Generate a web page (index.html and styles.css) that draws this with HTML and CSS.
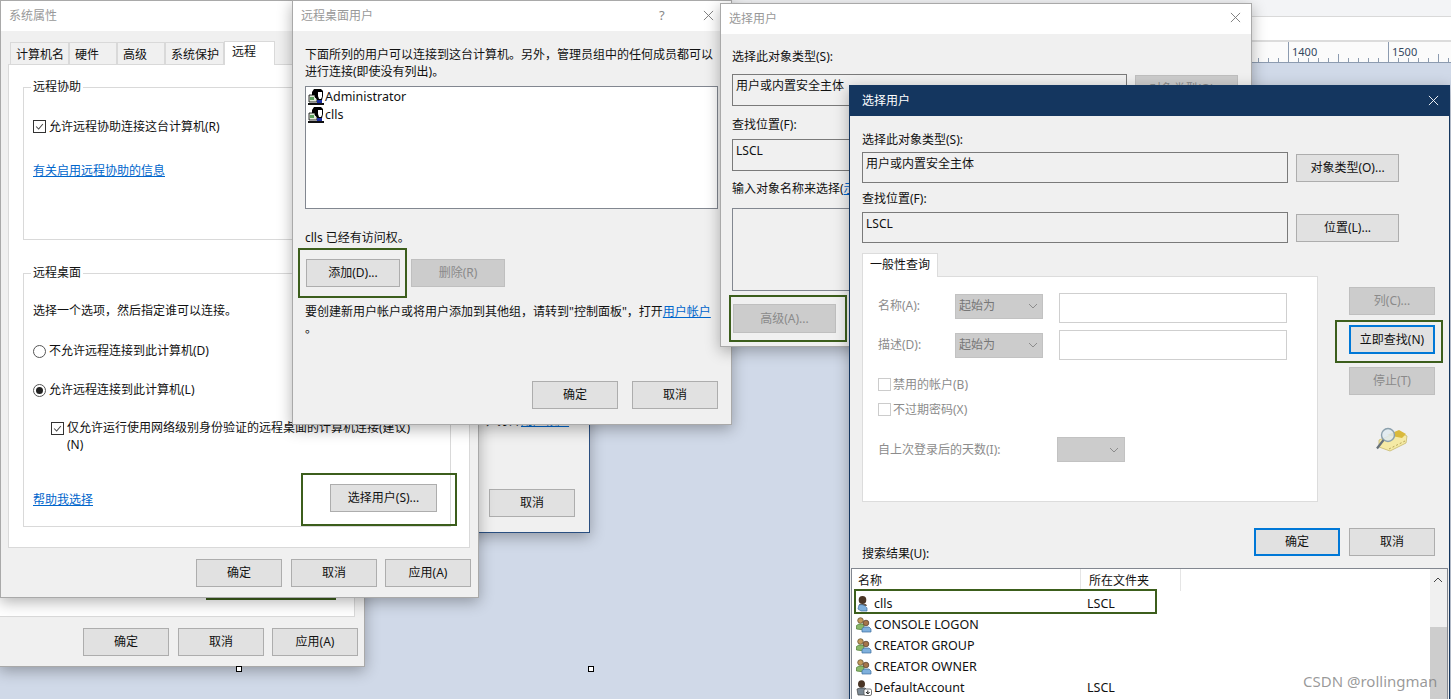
FILE: index.html
```html
<!DOCTYPE html>
<html lang="zh-CN">
<head>
<meta charset="utf-8">
<title>选择用户</title>
<link rel="stylesheet" href="styles.css">
</head>
<body>
<svg class="defs" width="0" height="0" aria-hidden="true">
  <symbol id="i-x" viewBox="0 0 12 12"><path d="M1 1l10 10M11 1L1 11" fill="none" stroke="currentColor" stroke-width="1"/></symbol>
  <symbol id="i-check" viewBox="0 0 13 13"><path d="M2.5 6.5l3 3 5-6" fill="none" stroke="#444" stroke-width="1.2"/></symbol>
  <symbol id="i-chev" viewBox="0 0 10 6"><path d="M1 1l4 4 4-4" fill="none" stroke="currentColor" stroke-width="1"/></symbol>
  <symbol id="i-old" viewBox="0 0 16 16">
    <path d="M6 0h7l2 2v5l-1 4-2 2H8L6 9 4 8V3z" fill="#000"/>
    <path d="M10 3h4v5l-1 2h-2l-1-3z" fill="#fff"/>
    <path d="M1 6h6v2l2 2v3H1z" fill="#dfe8d8" stroke="#000" stroke-width=".8"/>
    <rect x="2" y="8" width="4" height="3" fill="#5aa05a"/>
    <rect x="9" y="11" width="5" height="3" fill="#1a2ea0"/>
    <rect x="0" y="14" width="16" height="2" fill="#111"/>
  </symbol>
  <symbol id="i-user" viewBox="0 0 16 16">
    <ellipse cx="6.500" cy="4" rx="3.800" ry="3.900" fill="#4a3525"/>
    <path d="M3 8h7l1 2H4z" fill="#6a5a4a"/>
    <path d="M3 9c3-1 6 0 8 3v3H5l-3-2z" fill="#7fb0dc" stroke="#3e6f9e" stroke-width=".7"/>
  </symbol>
  <symbol id="i-group" viewBox="0 0 16 16">
    <circle cx="4.500" cy="3.500" r="2.800" fill="#c49a5a" stroke="#5a4a2a" stroke-width=".7"/>
    <path d="M0.500 12V8.500L3 7h4l1 2v4z" fill="#8ab86a" stroke="#4c7a34" stroke-width=".7"/>
    <circle cx="10" cy="6" r="2.800" fill="#a5764a" stroke="#4a3525" stroke-width=".7"/>
    <path d="M6 15v-3.500L8 10h5l2 2v3z" fill="#7fb0dc" stroke="#3e6f9e" stroke-width=".7"/>
  </symbol>
  <symbol id="i-account" viewBox="0 0 16 16">
    <ellipse cx="5.500" cy="4" rx="3.500" ry="3.800" fill="#4a3525"/>
    <path d="M1 9l3-1h5l2 2v5H2z" fill="#7c8a96" stroke="#444" stroke-width=".7"/>
    <rect x="8" y="9" width="7.500" height="6.500" rx="1.500" fill="#fff" stroke="#555" stroke-width=".8"/>
    <path d="M11.800 10.500v3M10 12l1.800 2 1.800-2" fill="none" stroke="#222" stroke-width="1"/>
  </symbol>
  <symbol id="i-find" viewBox="0 0 33 25">
    <path d="M4 13L24 5l8 4-1 7-16 8-11-4z" fill="#f5eaa5" stroke="#c6b96c" stroke-width=".8"/>
    <path d="M12 8l12-5 7 4-4 4z" fill="#d9b93c"/>
    <path d="M14 22l16-8" stroke="#b8a75a" stroke-dasharray="2 2"/>
    <circle cx="13" cy="8" r="6.500" fill="#dfeaf0" fill-opacity=".85" stroke="#8ba0ad" stroke-width="1.400"/>
    <path d="M8.500 13L2 21.500" stroke="#66717a" stroke-width="2.200"/>
  </symbol>
</svg>

<div class="desktop">
  <header class="chrome">
    <div class="strip"><span class="frag">标签</span></div>
    <div class="blank"></div>
    <div class="ruler"><span class="mark">1400</span><span class="mark">1500</span></div>
  </header>
  <span class="handle handle-l"></span>
  <span class="handle handle-r"></span>

  <section class="win win-a">
    <div class="a-panel"></div>
    <div class="foot foot-a">
      <button class="btn">确定</button><button class="btn">取消</button><button class="btn">应用(A)</button>
    </div>
    <div class="mark-box mark-a"></div>
  </section>

  <section class="win win-b">
    <p class="b-line">，打开<a class="link">用户帐户</a></p>
    <button class="btn b-btn">取消</button>
  </section>

  <section class="win win-c">
    <div class="title">系统属性</div>
    <nav class="tabs">
      <span class="tab tab-1">计算机名</span><span class="tab tab-2">硬件</span><span class="tab tab-2">高级</span><span class="tab tab-1">系统保护</span><span class="tab tab-on">远程</span>
    </nav>
    <div class="sheet">
      <fieldset class="group group-1">
        <legend>远程协助</legend>
        <label class="opt opt-1"><span class="cb"><svg class="cb-i"><use href="#i-check"/></svg></span>允许远程协助连接这台计算机(R)</label>
        <a class="link link-1">有关启用远程协助的信息</a>
      </fieldset>
      <fieldset class="group group-2">
        <legend>远程桌面</legend>
        <p class="hint">选择一个选项，然后指定谁可以连接。</p>
        <label class="opt opt-r1"><span class="radio"></span>不允许远程连接到此计算机(D)</label>
        <label class="opt opt-r2"><span class="radio radio-on"></span>允许远程连接到此计算机(L)</label>
        <label class="opt opt-nla"><span class="cb"><svg class="cb-i"><use href="#i-check"/></svg></span><span>仅允许运行使用网络级别身份验证的远程桌面的计算机连接(建议)<br>(N)</span></label>
        <div class="help-row">
          <a class="link help-link">帮助我选择</a>
          <button class="btn btn-wide">选择用户(S)...</button>
        </div>
      </fieldset>
    </div>
    <div class="foot foot-c">
      <button class="btn">确定</button><button class="btn">取消</button><button class="btn">应用(A)</button>
    </div>
    <div class="mark-box mark-c"></div>
  </section>

  <section class="win win-d">
    <div class="title">远程桌面用户<span class="help">?</span><svg class="close close-d"><use href="#i-x"/></svg></div>
    <div class="d-body">
      <p class="d-intro">下面所列的用户可以连接到这台计算机。另外，管理员组中的任何成员都可以<br>进行连接(即使没有列出)。</p>
      <ul class="d-list">
        <li><svg class="ico"><use href="#i-old"/></svg>Administrator</li>
        <li><svg class="ico"><use href="#i-old"/></svg>clls</li>
      </ul>
      <p class="d-access">clls 已经有访问权。</p>
      <div class="d-btns">
        <button class="btn btn-94">添加(D)...</button>
        <button class="btn btn-94 btn-off">删除(R)</button>
      </div>
      <p class="d-note">要创建新用户帐户或将用户添加到其他组，请转到"控制面板"，打开<a class="link">用户帐户</a><br>。</p>
      <div class="d-foot">
        <button class="btn">确定</button><button class="btn">取消</button>
      </div>
    </div>
    <div class="mark-box mark-d"></div>
  </section>

  <section class="win win-e">
    <div class="title title-e">选择用户<svg class="close close-e"><use href="#i-x"/></svg></div>
    <div class="e-body">
      <p class="lbl e-l1">选择此对象类型(S):</p>
      <div class="e-row e-r1"><div class="field e-field">用户或内置安全主体</div><button class="btn btn-103 btn-off e-obj">对象类型(O)...</button></div>
      <p class="lbl e-l2">查找位置(F):</p>
      <div class="e-row e-r2"><div class="field e-field">LSCL</div></div>
      <p class="lbl e-l3">输入对象名称来选择(<a class="link">示例</a>)(E):</p>
      <div class="e-area"></div>
      <button class="btn btn-103 btn-off e-adv">高级(A)...</button>
    </div>
    <div class="mark-box mark-e"></div>
  </section>

  <section class="win win-f">
    <div class="title title-f">选择用户<svg class="close close-f"><use href="#i-x"/></svg></div>
    <div class="f-body">
      <p class="lbl f-l1">选择此对象类型(S):</p>
      <div class="f-row f-r1"><div class="field f-field">用户或内置安全主体</div><button class="btn btn-103">对象类型(O)...</button></div>
      <p class="lbl f-l2">查找位置(F):</p>
      <div class="f-row f-r2"><div class="field f-field">LSCL</div><button class="btn btn-103">位置(L)...</button></div>
      <span class="q-tab">一般性查询</span>
      <div class="f-mid">
        <div class="q-panel">
          <div class="q-row q-r1"><span class="q-lab q-lab-up">名称(A):</span><span class="sel sel-up">起始为<svg class="chev"><use href="#i-chev"/></svg></span><span class="inp"></span></div>
          <div class="q-row q-r2"><span class="q-lab">描述(D):</span><span class="sel">起始为<svg class="chev"><use href="#i-chev"/></svg></span><span class="inp"></span></div>
          <label class="q-check q-c1"><span class="cb cb-off"></span>禁用的帐户(B)</label>
          <label class="q-check q-c2"><span class="cb cb-off"></span>不过期密码(X)</label>
          <div class="q-days"><span class="q-dlab">自上次登录后的天数(I):</span><span class="sel sel-empty"><svg class="chev"><use href="#i-chev"/></svg></span></div>
        </div>
        <div class="side">
          <button class="btn btn-off s-col">列(C)...</button>
          <button class="btn btn-focus s-now">立即查找(N)</button>
          <button class="btn btn-off s-stop">停止(T)</button>
          <svg class="finder"><use href="#i-find"/></svg>
        </div>
      </div>
      <div class="f-foot">
        <span class="lbl f-res">搜索结果(U):</span>
        <div class="f-btns"><button class="btn btn-focus">确定</button><button class="btn">取消</button></div>
      </div>
      <div class="results">
        <div class="r-main">
          <div class="r-head"><span class="h-name">名称</span><span class="h-loc">所在文件夹</span></div>
          <div class="r-item"><svg class="ico"><use href="#i-user"/></svg><span class="r-name">clls</span><span>LSCL</span></div>
          <div class="r-item"><svg class="ico"><use href="#i-group"/></svg><span class="r-name">CONSOLE LOGON</span></div>
          <div class="r-item"><svg class="ico"><use href="#i-group"/></svg><span class="r-name">CREATOR GROUP</span></div>
          <div class="r-item"><svg class="ico"><use href="#i-group"/></svg><span class="r-name">CREATOR OWNER</span></div>
          <div class="r-item"><svg class="ico"><use href="#i-account"/></svg><span class="r-name">DefaultAccount</span><span>LSCL</span></div>
        </div>
        <div class="scroll"><svg class="s-up"><use href="#i-chev"/></svg><div class="s-thumb"></div></div>
      </div>
    </div>
    <div class="mark-box mark-f1"></div>
    <div class="mark-box mark-f2"></div>
  </section>

  <div class="watermark">CSDN @rollingman</div>
</div>
</body>
</html>
```
FILE: styles.css
```css
* { box-sizing: border-box; }
html, body { margin: 0; padding: 0; }
body { width: 1451px; height: 699px; overflow: hidden; }
p, ul { margin: 0; padding: 0; }
.defs { position: absolute; }

.desktop {
  position: relative;
  width: 1451px;
  height: 699px;
  overflow: hidden;
  background: #d0d9e8;
  font: 12px/16px "Noto Sans", "Noto Sans CJK SC", sans-serif;
  color: #111;
}

/* background app */
.chrome { display: flex; flex-direction: column; }
.strip { position: relative; height: 17px; background: #f3f4f6; border-bottom: 1px solid #d9d9d9; overflow: hidden; }
.frag { position: absolute; left: 815px; top: -13px; color: #333; }
.blank { height: 25px; background: #fff; border-bottom: 2px solid #dcdcdc; }
.ruler {
  height: 21px;
  display: flex;
  padding-left: 1292px;
  background-color: #fbfbfb;
  border-bottom: 1px solid #8c9bb0;
  background-image:
    repeating-linear-gradient(to right, #8c9bb0 0 1px, transparent 1px 100px),
    repeating-linear-gradient(to right, transparent 0 50px, #8c9bb0 50px 51px, transparent 51px 100px),
    repeating-linear-gradient(to right, #8c9bb0 0 1px, transparent 1px 10px);
  background-size: 100% 100%, 100% 8px, 100% 4px;
  background-position: 88px 0, 88px bottom, 8px bottom;
  background-repeat: no-repeat;
}
.mark { flex: none; width: 100px; font-size: 11px; line-height: 19px; color: #33475e; }
.handle { position: absolute; z-index: 2; top: 666px; width: 6px; height: 6px; background: #fff; border: 1px solid #000; }
.handle-l { left: 236px; }
.handle-r { left: 588px; }

/* windows */
.win {
  position: absolute;
  display: flex;
  flex-direction: column;
  background: #f0f0f0;
  border: 1px solid #a9a9a9;
  box-shadow: 0 4px 14px rgba(0, 0, 0, .3);
}
.title { position: relative; flex: none; height: 30px; padding: 7px 0 0 8px; background: #fff; color: #999; }
.close { position: absolute; top: 9px; width: 11px; height: 11px; color: #777; }
.help { position: absolute; left: 366px; top: 6px; color: #888; font-size: 13px; }
.close-d { left: 410px; }
.close-e { left: 509px; top: 8px; }
.close-f { left: 578px; top: 9px; color: #fff; }

.btn {
  flex: none;
  width: 86px;
  height: 28px;
  padding: 0;
  background: #e1e1e1;
  border: 1px solid #adadad;
  border-radius: 0;
  color: #111;
  font: inherit;
}
.btn-94 { width: 94px; }
.btn-103 { width: 103px; }
.btn-wide { width: 107px; }
.btn-off { background: #ccc; border-color: #bfbfbf; color: #8a8a8a; }
.btn-focus { border: 2px solid #0078d7; }
.link { color: #0066cc; text-decoration: underline; }
.foot { display: flex; justify-content: flex-end; gap: 8px; }
.foot .btn:first-child { margin-right: 1px; }

.mark-box { position: absolute; border: 2px solid #3c5e1c; }
.mark-a { left: 206px; top: 259px; width: 130px; height: 40px; border-width: 3px; }
.mark-c { left: 300px; top: 472px; width: 156px; height: 53px; }
.mark-d { left: 5px; top: 247px; width: 109px; height: 50px; }
.mark-e { left: 8px; top: 291px; width: 118px; height: 47px; }
.mark-f1 { left: 485px; top: 234px; width: 108px; height: 43px; }
.mark-f2 { left: 4px; top: 503px; width: 303px; height: 25px; }

/* window A: behind */
.win-a { left: -1px; top: 300px; width: 366px; height: 367px; z-index: 1; }
.a-panel { flex: 1; margin: 0 9px 0 0; background: #fff; border-bottom: 1px solid #d9d9d9; border-right: 1px solid #d9d9d9; }
.foot-a { flex: none; height: 49px; padding: 11px 6px 0 0; }

/* window B: behind */
.win-b { left: 400px; top: 300px; width: 190px; height: 233px; padding: 111px 0 0 88px; z-index: 2; border-color: #2a4f80; }
.b-line { margin-left: -4px; line-height: 17px; white-space: nowrap; }
.b-btn { margin-top: 60px; }

/* window C: system properties */
.win-c { left: 0; top: 0; width: 479px; height: 598px; z-index: 3; }
.tabs { flex: none; display: flex; align-items: flex-end; height: 33px; padding-left: 9px; }
.tab { height: 22px; padding: 4px 0 0 5px; border: 1px solid #d9d9d9; border-bottom: 0; background: #f0f0f0; }
.tab-1 { width: 59px; }
.tab-2 { width: 48px; }
.tab-on { width: 51px; height: 24px; padding: 2px 0 0 7px; background: #fff; position: relative; top: 1px; z-index: 1; }
.sheet { flex: none; height: 484px; margin: 0 8px 0 7px; padding: 14px 18px 0 14px; background: #fff; border: 1px solid #d9d9d9; }
.group { display: block; margin: 0; padding: 0 12px 0 9px; min-width: 0; border: 1px solid #d9d9d9; }
.group legend { margin-left: -2px; padding: 0 2px; line-height: 16px; }
.group-1 { height: 161px; }
.group-2 { height: 262px; margin-top: 25px; }
.opt { display: flex; align-items: flex-start; gap: 3px; white-space: nowrap; }
.cb { flex: none; display: block; width: 13px; height: 13px; margin-top: 1px; background: #fff; border: 1px solid #333; }
.cb-off { border-color: #ccc; }
.cb-i { display: block; width: 11px; height: 11px; }
.radio { flex: none; display: flex; align-items: center; justify-content: center; width: 13px; height: 13px; margin-top: 2px; background: #fff; border: 1px solid #555; border-radius: 50%; }
.radio-on::after { content: ""; width: 7px; height: 7px; background: #222; border-radius: 50%; }
.opt-1 { margin-top: 24px; }
.link-1 { display: block; margin-top: 28px; width: max-content; }
.hint { margin-top: 22px; }
.opt-r1 { margin-top: 24px; }
.opt-r2 { margin-top: 23px; }
.opt-nla { margin: 21px 0 0 18px; line-height: 17px; }
.opt-nla .cb { margin-top: 3px; }
.help-row { display: flex; justify-content: space-between; align-items: center; margin-top: 31px; height: 28px; padding-right: 1px; }
.help-link { margin-top: 3px; }
.foot-c { flex: none; padding: 11px 7px 0 0; }

/* window D: remote desktop users */
.win-d { left: 292px; top: 0; width: 440px; height: 425px; z-index: 4; }
.d-body { position: relative; padding: 15px 13px 0 12px; }
.d-intro { line-height: 17px; white-space: nowrap; }
.d-list { list-style: none; height: 123px; margin-top: 6px; padding: 1px 2px; background: #fff; border: 1px solid #828790; }
.d-list li { display: flex; align-items: center; gap: 1px; height: 18px; font-size: 12.5px; }
.ico { flex: none; width: 16px; height: 16px; }
.d-access { margin-top: 21px; }
.d-btns { display: flex; gap: 11px; margin: 13px 0 0 1px; }
.d-note { margin-top: 16px; line-height: 17px; white-space: nowrap; }
.d-foot { display: flex; justify-content: flex-end; gap: 14px; margin-top: 44px; }

/* window E: select users, behind */
.win-e { left: 720px; top: 3px; width: 532px; height: 344px; z-index: 5; }
.title-e { height: 30px; }
.e-body { padding: 15px 0 0 11px; }
.e-l2 { margin-top: 11px; }
.e-l3 { margin-top: 10px; white-space: nowrap; }
.e-row { display: flex; align-items: flex-start; gap: 8px; }
.e-r1 { margin-top: 9px; }
.e-r2 { margin-top: 6px; }
.e-obj { margin-top: 1px; }
.field { flex: none; padding: 3px 3px; background: #f0f0f0; border: 1px solid #7a7a7a; }
.e-field { width: 395px; height: 32px; }
.e-area { width: 395px; height: 83px; margin-top: 11px; background: #f0f0f0; border: 1px solid #828790; }
.e-adv { display: block; height: 29px; margin: 13px 0 0 1px; }

/* window F: select users, active */
.win-f { left: 849px; top: 85px; width: 601px; height: 640px; z-index: 6; border-color: #14365f; }
.title-f { height: 30px; padding-left: 12px; background: #14365f; color: #fff; }
.f-body { padding: 16px 0 0 12px; }
.f-row { display: flex; align-items: center; gap: 8px; }
.f-r1 { margin-top: 4px; }
.f-l2 { margin-top: 8px; }
.f-r2 { margin-top: 5px; }
.f-field { width: 426px; height: 31px; }
.q-tab { display: block; width: 76px; height: 24px; margin-top: 10px; padding: 3px 0 0 7px; background: #fff; border: 1px solid #dcdcdc; border-bottom: 0; position: relative; z-index: 1; }
.f-mid { display: flex; margin-top: -1px; }
.q-panel { flex: none; width: 456px; height: 226px; padding: 16px 0 0 15px; background: #fff; border: 1px solid #dcdcdc; color: #8c8c8c; }
.q-row { display: flex; align-items: center; height: 30px; }
.q-r2 { margin-top: 7px; }
.q-lab { width: 77px; }
.q-lab-up { margin-bottom: 4px; }
.sel { display: flex; align-items: center; justify-content: space-between; width: 88px; height: 25px; padding: 0 4px 0 3px; background: #ccc; border: 1px solid #c2c2c2; color: #777; }
.sel-up { margin-bottom: 4px; }
.sel-empty { width: 68px; justify-content: flex-end; padding-right: 5px; }
.chev { width: 10px; height: 6px; color: #8c8c8c; }
.inp { width: 228px; height: 30px; margin-left: 16px; background: #fff; border: 1px solid #cfcfcf; }
.q-check { display: flex; align-items: flex-start; gap: 2px; }
.q-c1 { margin-top: 17px; }
.q-c2 { margin-top: 9px; }
.q-days { display: flex; align-items: center; margin-top: 19px; }
.q-dlab { width: 179px; }
.side { display: flex; flex-direction: column; margin: 11px 0 0 31px; }
.s-col { height: 28px; }
.s-now { height: 29px; margin-top: 10px; }
.s-stop { height: 28px; margin-top: 13px; }
.finder { width: 33px; height: 25px; margin: 32px 0 0 26px; }
.f-foot { display: flex; justify-content: space-between; height: 34px; margin-top: 26px; padding-right: 14px; }
.f-res { align-self: flex-end; }
.f-btns { display: flex; gap: 9px; }
.results { display: flex; width: 597px; height: 140px; margin: 6px 0 0 -11px; background: #fff; border: 1px solid #828790; border-bottom: 0; }
.r-main { flex: 1; }
.r-head { display: flex; height: 24px; }
.h-name { width: 229px; padding: 4px 0 0 6px; border-right: 1px solid #e5e5e5; height: 22px; }
.h-loc { width: 100px; padding: 4px 0 0 8px; border-right: 1px solid #e5e5e5; height: 22px; }
.r-item { display: flex; align-items: center; height: 21px; padding-left: 4px; font-size: 12.5px; }
.r-name { width: 215px; padding-left: 2px; }
.scroll { flex: none; position: relative; width: 17px; background: #f0f0f0; }
.s-up { display: block; width: 10px; height: 6px; margin: 8px 0 0 3px; transform: rotate(180deg); color: #444; }
.s-thumb { height: 80px; margin-top: 44px; background: #cdcdcd; }

.watermark {
  position: absolute;
  left: 1303px;
  top: 671px;
  z-index: 7;
  font: 15px/20px "Noto Sans", sans-serif;
  color: rgba(120, 120, 120, .75);
  white-space: nowrap;
}
```
